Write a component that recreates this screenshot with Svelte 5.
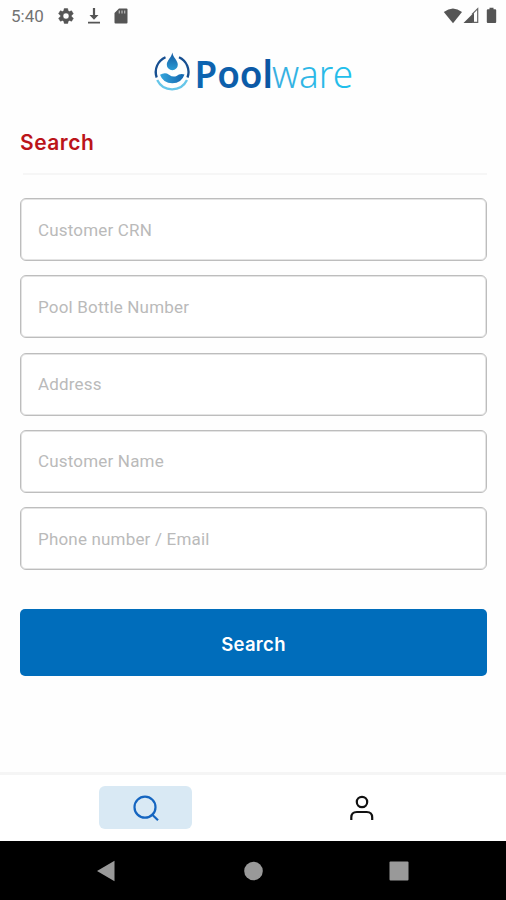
<script>
  const fields = [
    { id: 'crn', label: 'Customer CRN' },
    { id: 'bottle', label: 'Pool Bottle Number' },
    { id: 'address', label: 'Address' },
    { id: 'name', label: 'Customer Name' },
    { id: 'contact', label: 'Phone number / Email' }
  ];

  let values = $state({});
  let tab = $state('search');
</script>

<div class="screen">
  <div class="status">
    <span class="time">5:40</span>
    <svg class="gear" width="18" height="18" viewBox="0 0 24 24">
      <path fill="#555" stroke="#555" stroke-width=".6" fill-rule="evenodd" d="M19.4 13c.1-.3.1-.7.1-1s0-.7-.1-1l2.100-1.600c.2-.2.3-.4.100-.7l-2-3.400c-.1-.2-.4-.3-.6-.2l-2.500 1c-.5-.4-1.100-.7-1.700-1l-.4-2.600c0-.3-.2-.5-.5-.5h-4c-.2 0-.4.200-.5.500l-.4 2.600c-.6.300-1.200.6-1.700 1l-2.500-1c-.2-.1-.5 0-.6.200l-2 3.400c-.1.300 0 .5.200.7L4.500 11v2l-2.100 1.600c-.2.200-.3.500-.1.700l2 3.400c.1.200.4.300.6.200l2.500-1c.5.400 1.100.8 1.700 1l.4 2.600c.1.300.3.500.5.500h4c.3 0 .5-.2.500-.5l.4-2.600c.6-.2 1.200-.6 1.700-1l2.500 1c.2.100.5 0 .6-.2l2-3.400c.1-.2.1-.5-.1-.7zM12 16a4 4 0 1 1 0-8 4 4 0 0 1 0 8z" />
    </svg>
    <svg class="download" width="14" height="18" viewBox="0 0 14 18">
      <path fill="#555" d="M5.900 1h2.200v7h3.400L7 12.700 2.500 8h3.400zM1 14.800h12v1.700H1z" />
    </svg>
    <svg class="card" width="14" height="16" viewBox="0 0 14 16">
      <path fill="#555" d="M5 .5h7.500q1 0 1 1v13q0 1-1 1h-11q-1 0-1-1V5z" />
      <path d="M5.300 2.500v3M8 2.500v3M10.700 2.500v3" stroke="#bbb" stroke-width="1.200" />
    </svg>
    <svg class="signals" width="56" height="18" viewBox="0 0 56 18">
      <path fill="#555" d="M.8 5Q10-2 19 5L10 16.200z" />
      <path fill="#555" d="M20.500 16 31 5.500V16z" />
      <path d="M29 7.300 34.700 1.600V15.300H29" fill="none" stroke="#666" stroke-width="1.200" />
      <path fill="#555" d="M46.500.7h4v1.600h1.700q1 0 1 1V15q0 1-1 1h-7.400q-1 0-1-1V3.300q0-1 1-1h1.700z" />
    </svg>
  </div>

  <header>
    <svg width="210" height="64" viewBox="0 -10 210 64" role="img" aria-label="Poolware">
      <defs>
        <linearGradient id="drop" x1="0" y1="0" x2="0" y2="1">
          <stop offset="0" stop-color="#1458a0" />
          <stop offset="1" stop-color="#2b9bd4" />
        </linearGradient>
        <linearGradient id="bowl" x1="0" y1="0" x2="1" y2="0">
          <stop offset="0" stop-color="#35a6dc" />
          <stop offset="1" stop-color="#1264ae" />
        </linearGradient>
        <linearGradient id="pool" x1="0" y1="0" x2="1" y2="0">
          <stop offset="0" stop-color="#0d66b2" />
          <stop offset="1" stop-color="#0b55a2" />
        </linearGradient>
        <linearGradient id="ware" x1="0" y1="0" x2="1" y2="0">
          <stop offset="0" stop-color="#3aaee0" />
          <stop offset="1" stop-color="#1fc0ec" />
        </linearGradient>
      </defs>
      <path d="M13.500 5.200A16.200 16.200 0 0 0 4.700 25.500" fill="none" stroke="#174f91" stroke-width="2.300" />
      <path d="M27 5.200A16.200 16.200 0 0 1 35.500 25.500" fill="none" stroke="#174f91" stroke-width="2.300" />
      <path d="M5.200 28A16.600 16.600 0 0 0 35 28" fill="none" stroke="#66c6e9" stroke-width="2.300" />
      <path d="M20.300 .5C19.500 5.500 14.800 8.300 14.800 12.700a5.500 5.500 0 0 0 11 0C25.800 8.300 21.100 5.500 20.300 .5z" fill="url(#drop)" />
      <path d="M8 22.800Q13 19.800 17 22.700T24.500 24Q28 21 32.500 22.500 29.500 31.300 20.300 31.300T8 22.800z" fill="url(#bowl)" />
      <text x="42.500" y="36" textLength="78.500" lengthAdjust="spacingAndGlyphs" class="pool">Pool</text>
      <text x="120" y="36" textLength="81" lengthAdjust="spacingAndGlyphs" class="ware">ware</text>
    </svg>
  </header>

  <main>
    <h1>Search</h1>
    <form onsubmit={(e) => e.preventDefault()}>
      {#each fields as field (field.id)}
        <input placeholder={field.label} aria-label={field.label} bind:value={values[field.id]} />
      {/each}
      <button class="submit">Search</button>
    </form>
  </main>

  <nav class="tabs">
    <button class="tab" class:active={tab === 'search'} aria-label="Search" onclick={() => (tab = 'search')}>
      <svg width="28" height="28" viewBox="0 0 28 28" fill="none" stroke="currentColor" stroke-width="2.200">
        <circle cx="13" cy="13.200" r="10.500" />
        <path d="M19.500 20 26 26.300" />
      </svg>
    </button>
    <button class="tab" class:active={tab === 'profile'} aria-label="Profile" onclick={() => (tab = 'profile')}>
      <svg width="28" height="28" viewBox="0 0 28 28" fill="none" stroke="currentColor" stroke-width="2.200">
        <circle cx="14" cy="8" r="5.200" />
        <path d="M3.300 26V23.500q0-5.500 5.500-5.500h9.900q5.500 0 5.500 5.500V26" />
      </svg>
    </button>
  </nav>

  <div class="system">
    <svg width="20" height="22" viewBox="0 0 20 22"><path d="M1 11 18.500.8v20.400z" /></svg>
    <svg width="20" height="22" viewBox="0 0 20 22"><circle cx="10.500" cy="11" r="9.300" /></svg>
    <svg width="20" height="22" viewBox="0 0 20 22"><rect x=".5" y="1.500" width="19" height="19" rx="1" /></svg>
  </div>
</div>

<style>
  :global(body) {
    margin: 0;
    background: #fff;
  }

  .screen {
    display: flex;
    flex-direction: column;
    width: 506px;
    height: 900px;
    overflow: hidden;
    background: #fefefe;
    font-family: Roboto, sans-serif;
  }

  .status {
    display: flex;
    align-items: center;
    box-sizing: border-box;
    height: 32px;
    padding: 0 7px 0 11px;
  }

  .time {
    width: 46px;
    font-size: 17px;
    color: #737373;
  }

  .download {
    margin-left: 12px;
  }

  .card {
    margin-left: 13px;
  }

  .signals {
    margin-left: auto;
  }

  header {
    display: flex;
    height: 72px;
    padding: 10px 0 0 152px;
    box-sizing: border-box;
  }

  header svg {
    flex: none;
  }

  .pool,
  .ware {
    font-family: "Noto Sans", sans-serif;
    font-size: 38px;
  }

  .pool {
    font-weight: 600;
    fill: url(#pool);
  }

  .ware {
    font-weight: 300;
    fill: url(#ware);
  }

  main {
    flex: 1;
    padding: 24px 19px 0 20px;
  }

  h1 {
    height: 45px;
    margin: 0 0 23px 3px;
    border-bottom: 2px solid #f6f6f6;
    font-family: Inter, sans-serif;
    font-size: 21px;
    font-weight: 600;
    line-height: 29px;
    text-indent: -3px;
    letter-spacing: 0.5px;
    color: #bb1419;
  }

  form {
    display: flex;
    flex-direction: column;
    gap: 14.300px;
  }

  input {
    box-sizing: border-box;
    width: 100%;
    height: 63px;
    padding: 0 17px;
    border: 1px solid #bdbdbd;
    border-radius: 6px;
    background: #fff;
    box-shadow: inset 0 0 0 1px #e4e4e4;
    font: 17px Roboto, sans-serif;
    letter-spacing: 0.18px;
  }

  input::placeholder {
    color: #bababa;
    opacity: 1;
  }

  button {
    padding: 0;
    border: none;
  }

  .submit {
    height: 67px;
    margin-top: 25px;
    padding-top: 2px;
    border-radius: 5px;
    background: #006dbb;
    color: #fff;
    font-family: Inter, sans-serif;
    font-size: 18.500px;
    font-weight: 600;
    letter-spacing: 0.3px;
  }

  .tabs {
    display: flex;
    justify-content: space-between;
    box-sizing: border-box;
    height: 69px;
    padding: 11px 98px 0 99px;
    border-top: 3px solid #f5f5f5;
    background: #fff;
  }

  .tab {
    display: flex;
    align-items: center;
    justify-content: center;
    width: 93px;
    height: 43px;
    border-radius: 6px;
    background: none;
    color: #111;
  }

  .tab.active {
    background: #d9e9f4;
    color: #1565c0;
  }

  .system {
    display: flex;
    align-items: center;
    justify-content: space-between;
    height: 59px;
    padding: 0 97px 0 96px;
    background: #000;
  }

  .system svg {
    fill: #999;
  }
</style>
